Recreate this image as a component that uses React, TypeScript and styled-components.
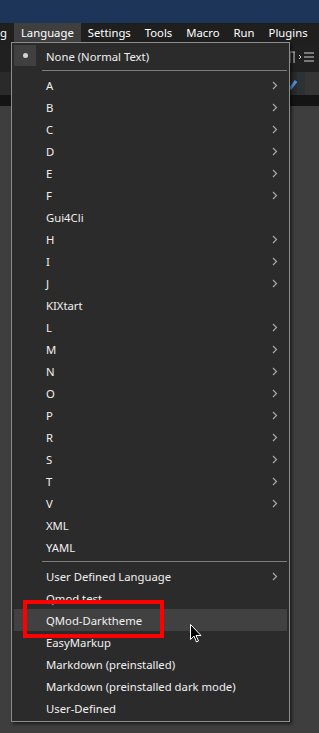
import React, { FC } from 'react';
import styled, { createGlobalStyle } from 'styled-components';

const GlobalStyle = createGlobalStyle`
  html, body {
    margin: 0;
    padding: 0;
    background: #3e3e3e;
  }
  body {
    font-family: "Noto Sans", "Open Sans", sans-serif;
    font-size: 11.3px;
    overflow: hidden;
  }
`;

const Screen = styled.div`
  position: relative;
  width: 319px;
  height: 733px;
  display: flex;
  flex-direction: column;
  overflow: hidden;
  background: #3e3e3e;
`;

const TitleBar = styled.div`
  height: 23px;
  background: #1d3558;
`;

const MenuBar = styled.div`
  height: 19px;
  display: flex;
  align-items: center;
  background: #1f1f1f;
  white-space: nowrap;
  overflow: hidden;
`;

const MenuItem = styled.div<{ $open?: boolean; $first?: boolean }>`
  height: 19px;
  line-height: 19px;
  padding: ${p => (p.$first ? '0 7px 0 0' : '0 7px')};
  color: #ffffff;
  background: ${p => (p.$open ? '#3f3f3f' : 'transparent')};
`;

const Toolbar = styled.div`
  height: 30px;
  background: #202020;
  display: flex;
  align-items: center;
  justify-content: flex-end;
  padding-right: 2px;
`;

const TabBar = styled.div`
  height: 23px;
  background: #2a2a2a;
  display: flex;
  align-items: center;
`;

const TabFill = styled.div`
  flex: 1;
`;

const TabEnd = styled.div`
  width: 14px;
  height: 23px;
  background: #353535;
  border-left: 8px solid #2c3136;
`;

const Strip = styled.div`
  height: 11px;
  background: #141414;
`;

const Editor = styled.div`
  flex: 1;
  background: #3e3e3e;
`;

const Dropdown = styled.div`
  position: absolute;
  left: 11px;
  top: 42px;
  width: 273px;
  background: #2b2b2b;
  border: 1px solid #8c8c8c;
  box-shadow: 2px 2px 3px rgba(0, 0, 0, 0.55);
  padding: 2px;
  display: flex;
  flex-direction: column;
`;

const Row = styled.div<{ $hover?: boolean }>`
  height: 22px;
  display: flex;
  align-items: center;
  color: #f0f0f0;
  background: ${p => (p.$hover ? '#414141' : 'transparent')};
`;

const Check = styled.div<{ $on?: boolean }>`
  width: 22px;
  height: 21px;
  align-self: flex-start;
  display: flex;
  align-items: center;
  justify-content: center;
  background: ${p => (p.$on ? '#404040' : 'transparent')};
  margin-right: 10px;
`;

const Dot = styled.div`
  width: 5px;
  height: 5px;
  border-radius: 50%;
  background: #d4d4d4;
`;

const Label = styled.div`
  flex: 1;
  white-space: nowrap;
`;

const Arrow = styled.svg`
  width: 6px;
  height: 9px;
  margin-right: 9px;
`;

const Separator = styled.div`
  height: 7px;
  display: flex;
  align-items: center;
  padding-left: 28px;

  &::after {
    content: '';
    flex: 1;
    height: 1px;
    background: #7c7c7c;
  }
`;

const Highlight = styled.div`
  position: absolute;
  left: 23px;
  top: 600px;
  width: 133px;
  height: 30px;
  border: 4px solid #ff0000;
`;

const Cursor = styled.svg`
  position: absolute;
  left: 190px;
  top: 624px;
  width: 12px;
  height: 19px;
`;

type Item = { label: string; sub?: boolean; hover?: boolean };

const letters: Item[] = [
  { label: 'A', sub: true },
  { label: 'B', sub: true },
  { label: 'C', sub: true },
  { label: 'D', sub: true },
  { label: 'E', sub: true },
  { label: 'F', sub: true },
  { label: 'Gui4Cli' },
  { label: 'H', sub: true },
  { label: 'I', sub: true },
  { label: 'J', sub: true },
  { label: 'KIXtart' },
  { label: 'L', sub: true },
  { label: 'M', sub: true },
  { label: 'N', sub: true },
  { label: 'O', sub: true },
  { label: 'P', sub: true },
  { label: 'R', sub: true },
  { label: 'S', sub: true },
  { label: 'T', sub: true },
  { label: 'V', sub: true },
  { label: 'XML' },
  { label: 'YAML' },
];

const userLangs: Item[] = [
  { label: 'User Defined Language', sub: true },
  { label: 'Qmod test' },
  { label: 'QMod-Darktheme', hover: true },
  { label: 'EasyMarkup' },
  { label: 'Markdown (preinstalled)' },
  { label: 'Markdown (preinstalled dark mode)' },
  { label: 'User-Defined' },
];

const MenuRow: FC<Item & { checked?: boolean }> = ({ label, sub, hover, checked }) => (
  <Row $hover={hover}>
    <Check $on={checked}>{checked && <Dot />}</Check>
    <Label>{label}</Label>
    {sub && (
      <Arrow viewBox="0 0 6 9">
        <polyline points="1,1 4.5,4.5 1,8" fill="none" stroke="#a8a8a8" strokeWidth="1.2" />
      </Arrow>
    )}
  </Row>
);

const App: FC = () => (
  <>
    <GlobalStyle />
    <Screen>
      <TitleBar />
      <MenuBar>
        <MenuItem $first>g</MenuItem>
        <MenuItem $open>Language</MenuItem>
        <MenuItem>Settings</MenuItem>
        <MenuItem>Tools</MenuItem>
        <MenuItem>Macro</MenuItem>
        <MenuItem>Run</MenuItem>
        <MenuItem>Plugins</MenuItem>
        <MenuItem>W</MenuItem>
      </MenuBar>
      <Toolbar>
        <svg width="30" height="16" viewBox="0 0 30 16">
          <path d="M2 3h6M3 3v11M7 3v11" stroke="#d0d0d0" strokeWidth="1" fill="none" />
          <path d="M12 6l2 2-2 2M17 4h10M17 8h10M17 12h10" stroke="#d0d0d0" strokeWidth="1" fill="none" />
        </svg>
      </Toolbar>
      <TabBar>
        <TabFill />
        <svg width="8" height="12" viewBox="0 0 8 12">
          <path d="M1 11L7 3" stroke="#4a90d9" strokeWidth="3" />
        </svg>
        <TabEnd />
      </TabBar>
      <Strip />
      <Editor />
      <Dropdown>
        <MenuRow label="None (Normal Text)" checked />
        <Separator />
        {letters.map(it => (
          <MenuRow key={it.label} {...it} />
        ))}
        <Separator />
        {userLangs.map(it => (
          <MenuRow key={it.label} {...it} />
        ))}
      </Dropdown>
      <Highlight />
      <Cursor viewBox="0 0 12 19">
        <path d="M0.5 0.5 L0.5 15.5 L4 12 L6.5 18 L8.5 17 L6 11.5 L11 11.5 Z" fill="#000" stroke="#fff" strokeWidth="1" />
      </Cursor>
    </Screen>
  </>
);

export default App;
